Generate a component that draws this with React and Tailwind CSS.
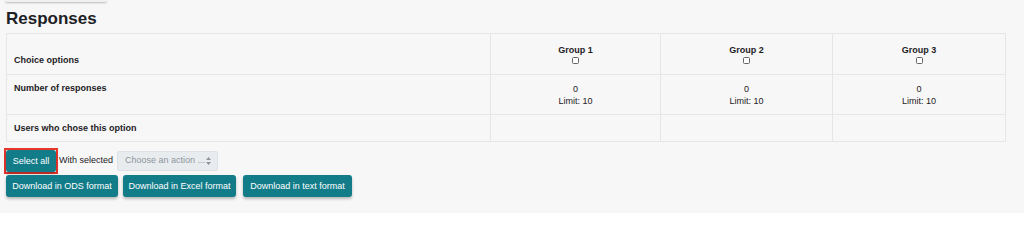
import React from "react";

const groups = ["Group 1", "Group 2", "Group 3"];

const TealButton = ({ children, className = "" }) => (
  <button
    type="button"
    className={`flex h-[22px] items-center justify-center whitespace-nowrap rounded-[3px] bg-[#137c89] px-0 text-[9px] leading-none text-white shadow-[0_2px_3px_rgba(0,0,0,0.25)] ${className}`}
  >
    {children}
  </button>
);

const App = () => {
  return (
    <div
      className="h-[213px] w-full overflow-hidden bg-[#f7f7f7] px-[6px] text-[#1d2125]"
      style={{ fontFamily: '"Liberation Sans", Arial, sans-serif' }}
    >
      <div className="ml-[-1px] h-[2px] w-[102px] rounded-b-[3px] bg-[#f1f1f1] shadow-[0_1px_2px_rgba(0,0,0,0.25)]" />

      <h2 className="mt-[7px] text-[17px] font-bold leading-[20px]">Responses</h2>

      <table className="mt-[4px] w-[999px] table-fixed border-collapse border border-[#e6e6e6] text-[9px] leading-[12px]">
        <colgroup>
          <col className="w-[484px]" />
          <col className="w-[170px]" />
          <col className="w-[172px]" />
          <col className="w-[173px]" />
        </colgroup>
        <tbody>
          <tr className="h-[41px]">
            <th className="border border-[#e6e6e6] px-[7px] pb-[8px] text-left align-bottom font-bold">
              Choice options
            </th>
            {groups.map((g) => (
              <th key={g} className="border border-[#e6e6e6] px-[7px] pb-[10px] text-center align-bottom font-bold">
                <div>{g}</div>
                <div className="mt-[1px] flex justify-center">
                  <span className="block h-[7px] w-[7px] rounded-[1.5px] border border-[#666] bg-white" />
                </div>
              </th>
            ))}
          </tr>
          <tr className="h-[40px]">
            <th className="border border-[#e6e6e6] px-[7px] pt-[7px] text-left align-top font-bold">
              Number of responses
            </th>
            {groups.map((g) => (
              <td key={g} className="border border-[#e6e6e6] px-[7px] pt-[8px] text-center align-top">
                <div>0</div>
                <div>Limit: 10</div>
              </td>
            ))}
          </tr>
          <tr className="h-[27px]">
            <th className="border border-[#e6e6e6] px-[7px] text-left align-middle font-bold">
              Users who chose this option
            </th>
            {groups.map((g) => (
              <td key={g} className="border border-[#e6e6e6]" />
            ))}
          </tr>
        </tbody>
      </table>

      <div className="mt-[6px] flex items-center">
        <div className="ml-[-2px] flex border-2 border-[#e8362d]">
          <TealButton className="w-[50px]">Select all</TealButton>
        </div>
        <span className="ml-[1px] text-[9px]">With selected</span>
        <div className="ml-[4px] flex h-[20px] w-[101px] items-center justify-between rounded-[2px] border border-[#dee2e6] bg-[#e9ecef] pl-[7px] pr-[6px] text-[9px] text-[#8e959c]">
          <span className="whitespace-nowrap">Choose an action ...</span>
          <svg width="5" height="8" viewBox="0 0 5 8" fill="#8e959c">
            <path d="M2.5 0 L5 3 H0 Z M0 5 H5 L2.5 8 Z" />
          </svg>
        </div>
      </div>

      <div className="mt-px flex gap-[5px]">
        <TealButton className="w-[112px]">Download in ODS format</TealButton>
        <TealButton className="w-[113px]">Download in Excel format</TealButton>
        <TealButton className="ml-[2px] w-[109px]">Download in text format</TealButton>
      </div>
    </div>
  );
};

export default App;
